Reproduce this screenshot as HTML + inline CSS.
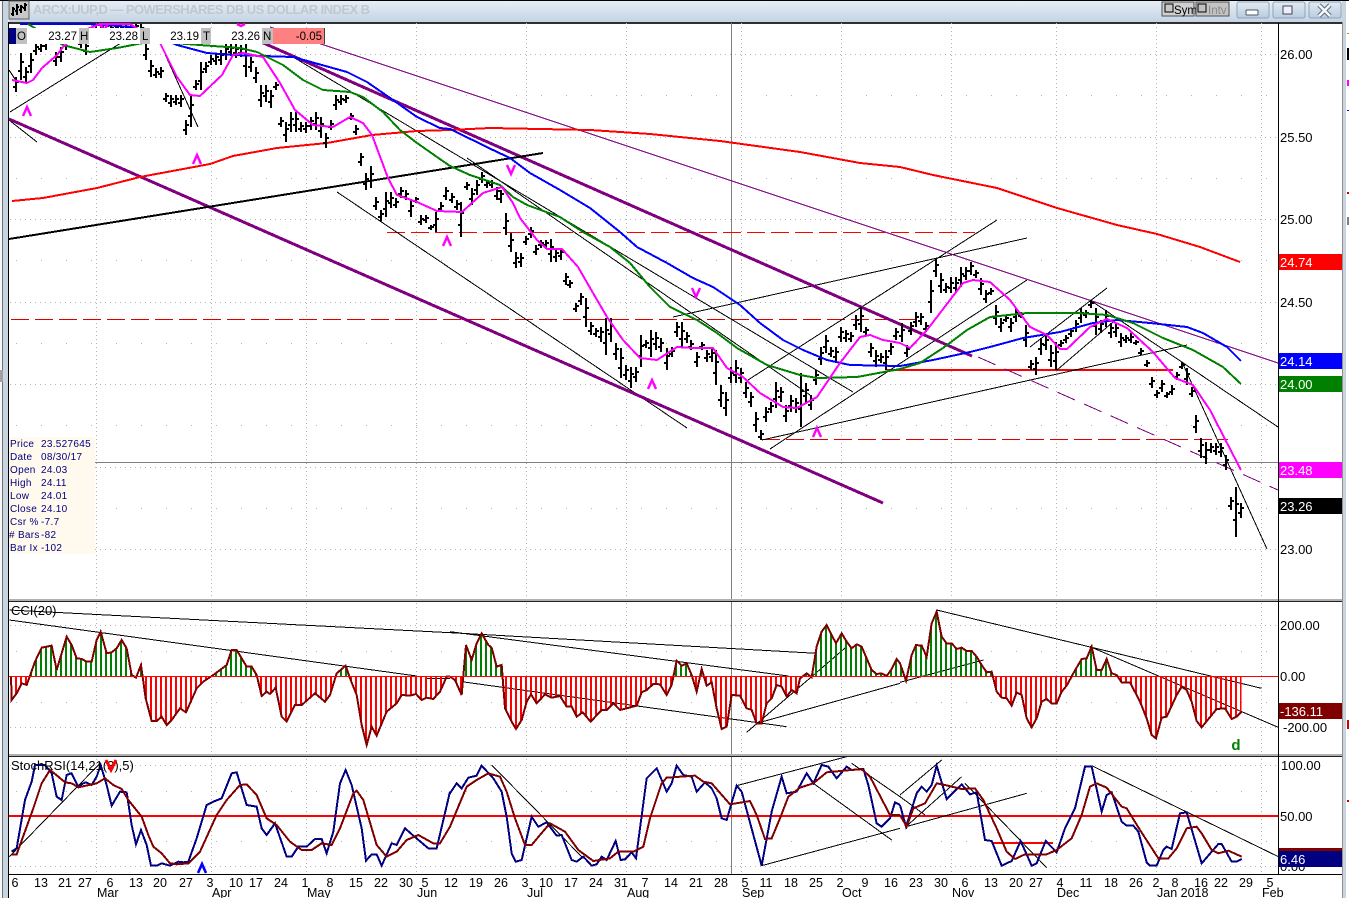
<!DOCTYPE html>
<html><head><meta charset="utf-8"><title>ARCX:UUP,D</title>
<style>
html,body{margin:0;padding:0;background:#fff;width:1349px;height:898px;overflow:hidden}
svg{display:block;font-family:"Liberation Sans",sans-serif}
.a{font-size:13px;fill:#000}
.w{font-size:13px;fill:#fff}
.d{font-size:12.5px;fill:#000;text-anchor:middle}
.m{font-size:12.5px;fill:#000}
.i{font-size:10px;fill:#000080;letter-spacing:.3px}
.h{font-size:11.5px;fill:#000}
.r{text-anchor:end}
</style></head><body>
<svg width="1349" height="898" viewBox="0 0 1349 898" xmlns="http://www.w3.org/2000/svg" shape-rendering="crispEdges">
<defs>
<linearGradient id="tb" x1="0" y1="0" x2="0" y2="1"><stop offset="0" stop-color="#e6eef6"/><stop offset="1" stop-color="#c4d4e4"/></linearGradient>
<linearGradient id="bt" x1="0" y1="0" x2="0" y2="1"><stop offset="0" stop-color="#e2ebf4"/><stop offset="1" stop-color="#b8cce0"/></linearGradient>
<pattern id="hs" width="15" height="900" patternUnits="userSpaceOnUse"><rect width="6" height="244" fill="#008000" shape-rendering="crispEdges"/><rect y="244" width="6" height="656" fill="#f00" shape-rendering="crispEdges"/></pattern>
<clipPath id="mc"><rect x="9" y="23" width="1269" height="576"/></clipPath>
<clipPath id="cc"><rect x="9" y="602" width="1269" height="152"/></clipPath>
<clipPath id="sc"><rect x="9" y="757" width="1269" height="117"/></clipPath>
</defs>

<!-- frame -->
<rect width="1349" height="898" fill="#fff"/>
<rect x="0" y="0" width="9" height="898" fill="#f4f6f8"/>
<rect x="2" y="0" width="1" height="898" fill="#707070"/>
<rect x="3" y="0" width="5" height="898" fill="#c8d4e0"/>
<rect x="8" y="22" width="1" height="876" fill="#000"/>
<rect x="0" y="370" width="3" height="12" fill="#a0a0a0"/>
<rect x="1342" y="0" width="4" height="898" fill="#c8d4e0"/>
<rect x="1342" y="22" width="1" height="876" fill="#909090"/>
<rect x="1347" y="33" width="2" height="1" fill="#d08020"/><rect x="1347" y="48" width="2" height="12" fill="#000"/><rect x="1347" y="80" width="2" height="6" fill="#f0f"/><rect x="1347" y="110" width="2" height="1" fill="#00f"/><rect x="1347" y="192" width="2" height="2" fill="#c00"/><rect x="1347" y="217" width="2" height="8" fill="#808080"/><rect x="1347" y="720" width="2" height="9" fill="#c00"/><rect x="1347" y="800" width="2" height="2" fill="#c00"/>

<!-- title bar -->
<rect x="0" y="0" width="1349" height="1" fill="#000"/>
<rect x="9" y="1" width="1333" height="21" fill="url(#tb)"/>
<rect x="9" y="22" width="1333" height="2" fill="#303030"/>
<rect x="9" y="1" width="20" height="18" fill="#c8c8c8" stroke="#606060"/>
<path d="M13 7v9M11 14h2M13 9h2M17 4v11M15 11h2M17 7h2M21 5v8M19 10h2M21 7h2M25 3v8M23 8h2M25 5h2" stroke="#000" stroke-width="2" fill="none"/>
<text x="33" y="14" font-size="13" font-weight="bold" fill="#c0c7ce" textLength="337">ARCX:UUP,D &#8212; POWERSHARES DB US DOLLAR INDEX B</text>

<rect x="1162" y="2" width="32" height="14" fill="#d0d0d0" stroke="#505050"/><rect x="1165" y="4" width="8" height="8" fill="#c8c8c8" stroke="#000"/><text x="1174" y="14" font-size="11.5" fill="#000">Sym</text>
<rect x="1196" y="2" width="33" height="14" fill="#c4c4c4" stroke="#505050"/><rect x="1198" y="4" width="8" height="8" fill="#c0c0c0" stroke="#000"/><text x="1208" y="14" font-size="11.5" fill="#888">Intv</text>
<rect x="1237" y="2" width="32" height="16" rx="2" fill="url(#bt)" stroke="#8ea4b8"/><rect x="1246" y="10" width="12" height="5" rx="1" fill="#fff" stroke="#505860"/>
<rect x="1273" y="2" width="32" height="16" rx="2" fill="url(#bt)" stroke="#8ea4b8"/><rect x="1283" y="6" width="9" height="8" fill="#eef" stroke="#404850" stroke-width="1.4"/>
<rect x="1309" y="2" width="32" height="16" rx="2" fill="url(#bt)" stroke="#8ea4b8"/><path d="M1319 5l11 11M1330 5l-11 11" stroke="#606c78" stroke-width="4.5" shape-rendering="auto"/><path d="M1319 5l11 11M1330 5l-11 11" stroke="#f4f8fc" stroke-width="2.5" fill="none" shape-rendering="auto"/>

<!-- grid main -->
<g stroke="#b4b4b4" stroke-width="1" fill="none">
<g stroke-dasharray="1 4">
<path d="M10 54.5H1278M10 137.5H1278M10 219.5H1278M10 302.5H1278M10 384.5H1278M10 467.5H1278M10 549.5H1278"/>
<path d="M10 625.5H1278M10 727.5H1278M10 765.5H1278M10 866.5H1278"/>
</g>
<path stroke-dasharray="1 24" d="M16 95.5H1278M16 178.5H1278M16 260.5H1278M16 343.5H1278M16 425.5H1278M16 508.5H1278M16 651.5H1278M16 702.5H1278M16 791.5H1278M16 841.5H1278"/>
<path stroke-dasharray="1 3" d="M96.5 23V874M211.5 23V874M306.5 23V874M416.5 23V874M526.5 23V874M626.5 23V874M741.5 23V874M841.5 23V874M951.5 23V874M1056.5 23V874M1156.5 23V874M1261.5 23V874"/>
</g>

<!-- crosshair -->
<path d="M731.5 23V874M95 462.5H1278" stroke="#808080" stroke-width="1" fill="none"/>

<!-- MAIN PANEL -->
<g clip-path="url(#mc)" fill="none">
<!-- dashed red -->
<path d="M11 319.5H917" stroke="#d80000" stroke-dasharray="18 6"/>
<path d="M387 232.5H975" stroke="#f00" stroke-dasharray="18 6"/>
<path d="M762 439.5H1228" stroke="#e00000" stroke-dasharray="18 6"/>
<path d="M887 370H1173" stroke="#f00" stroke-width="2"/>
<!-- thin black -->
<g stroke="#000" stroke-width="1">
<path d="M10 112L145 28M9 70L17 82M9 120L37 142M160 43L198 127"/>
<path d="M337 192L687 428M293 57L853 392M467 158L810 395"/>
<path d="M762 440L1187 345M748 380L997 220M770 449L1027 280M673 317L1027 238"/>
<path d="M1030 347L1107 288M1057 370L1113 322M1090 300L1278 427M1182 362L1267 549"/>
</g>
<!-- purple -->
<path d="M270 27L1278 363" stroke="#800080" stroke-width="1"/>
<path d="M978 357L1278 490" stroke="#800080" stroke-width="1" stroke-dasharray="19 10"/>
<path d="M9 119L883 503" stroke="#800080" stroke-width="3"/>
<path d="M243 34L972 356" stroke="#800080" stroke-width="3"/>
<!-- black thick -->
<path d="M9 239L543 153" stroke="#000" stroke-width="2"/>
<!-- red 200 -->
<polyline stroke="#f00" stroke-width="2" points="12,201 43,198 97,188 140,177 210,164 233,156 277,148 327,143 372,135 417,131 450,130 490,128 590,130 650,134 720,141 800,152 860,163 900,167 933,175 997,188 1057,208 1117,225 1157,234 1200,247 1240,262"/>
<!-- bars -->
<path stroke="#000" stroke-width="2" d="
M16 77v15m-3-5h3m0-5h3M21 53v27m-3-9h3m0-9h3M26 67v15m-3-5h3m0-5h3M31 53v20m-3-7h3m0-6h3M36 43v12m-3-4h3m0-4h3M41 42v10m-3-3h3m0-3h3M46 38v12m-3-4h3m0-4h3M51 30v12m-3-4h3m0-4h3M56 52v14m-3-5h3m0-4h3M61 47v15m-3-5h3m0-5h3M66 38v12m-3-4h3m0-4h3M71 28v12m-3-4h3m0-4h3M76 28v15m-3-5h3m0-5h3M81 35v13m-3-4h3m0-5h3M86 42v13m-3-4h3m0-5h3M91 30v14m-3-5h3m0-4h3M96 25v13m-3-4h3m0-5h3M101 24v10m-3-3h3m0-4h3M106 24v8m-3-3h3m0-3h3M111 24v12m-3-4h3m0-4h3M116 24v12m-3-4h3m0-4h3M121 24v10m-3-3h3m0-3h3M126 24v10m-3-3h3m0-3h3M131 24v8m-3-3h3m0-2h3M136 24v6m-3-2h3m0-2h3M141 24v10m-3-3h3m0-3h3
M146 43v17m-3-5h3m0-6h3M151 60v17m-3-6h3m0-5h3M156 68v10m-3-3h3m0-3h3M161 67v11m-3-4h3m0-3h3M166 93v9m-3-3h3m0-3h3M171 95v12m-3-4h3m0-4h3M176 95v10m-3-3h3m0-3h3M181 95v12m-3-4h3m0-4h3M186 120v15m-3-5h3m0-5h3M191 95v32m-3-11h3m0-11h3M196 80v10m-3-3h3m0-3h3M201 62v28m-3-9h3m0-9h3M206 62v11m-3-4h3m0-3h3M211 55v10m-3-3h3m0-3h3M216 53v12m-3-4h3m0-4h3M221 50v15m-3-5h3m0-5h3M226 43v17m-3-6h3m0-5h3M231 43v13m-3-4h3m0-4h3M236 44v14m-3-5h3m0-4h3M241 45v12m-3-4h3m0-4h3M246 43v34m-3-11h3m0-11h3M251 57v15m-3-5h3m0-5h3M256 67v16m-3-5h3m0-5h3M261 85v22m-3-7h3m0-7h3M266 85v17m-3-6h3m0-5h3M271 90v18m-3-6h3m0-6h3M276 82v8m-3-3h3m0-2h3
M281 117v10m-3-3h3m0-3h3M286 122v20m-3-7h3m0-6h3M291 112v20m-3-7h3m0-6h3M296 112v20m-3-7h3m0-6h3M301 122v10m-3-3h3m0-3h3M306 122v11m-3-4h3m0-3h3M311 117v13m-3-4h3m0-5h3M316 112v18m-3-6h3m0-6h3M321 117v21m-3-7h3m0-7h3M326 133v15m-3-5h3m0-5h3M331 120v10m-3-3h3m0-3h3M336 95v15m-3-5h3m0-5h3M341 95v10m-3-3h3m0-3h3M346 95v8m-3-3h3m0-2h3M351 113v7m-3-2h3m0-2h3M356 125v10m-3-3h3m0-3h3M361 153v13m-3-4h3m0-5h3M366 173v17m-3-6h3m0-5h3M371 166v22m-3-7h3m0-7h3M376 197v13m-3-4h3m0-4h3M381 210v11m-3-4h3m0-3h3M386 192v25m-3-8h3m0-8h3M391 192v16m-3-5h3m0-5h3M396 198v10m-3-3h3m0-3h3M401 187v11m-3-4h3m0-3h3M406 190v10m-3-3h3m0-3h3M411 200v17m-3-6h3m0-5h3M416 197v6m-3-2h3m0-2h3M421 215v10m-3-3h3m0-3h3M426 215v8m-3-3h3m0-2h3M431 225v5m-3-2h3m0-1h3M436 212v20m-3-7h3m0-6h3M441 202v10m-3-3h3m0-3h3M446 187v13m-3-4h3m0-5h3
M452 193v10m-3-3h3m0-3h3M457 200v10m-3-3h3m0-3h3M461 202v35m-3-12h3m0-12h3M467 182v8m-3-3h3m0-2h3M472 188v17m-3-6h3m0-5h3M477 180v15m-3-5h3m0-5h3M482 172v11m-3-4h3m0-3h3M487 180v8m-3-3h3m0-2h3M492 180v8m-3-3h3m0-2h3M497 187v13m-3-4h3m0-5h3M501 190v13m-3-4h3m0-5h3M506 213v22m-3-7h3m0-7h3M511 233v19m-3-6h3m0-6h3M516 252v16m-3-5h3m0-5h3M521 253v14m-3-5h3m0-4h3M526 236v9m-3-3h3m0-3h3M531 227v11m-3-4h3m0-3h3M536 245v10m-3-3h3m0-3h3M541 240v8m-3-3h3m0-2h3M546 240v8m-3-3h3m0-2h3M551 239v23m-3-8h3m0-7h3M556 248v14m-3-5h3m0-4h3M561 248v12m-3-4h3m0-4h3M566 273v12m-3-4h3m0-4h3M570 280v8m-3-3h3m0-2h3M576 303v9m-3-3h3m0-3h3M581 293v12m-3-4h3m0-4h3M586 298v29m-3-10h3m0-9h3M591 322v13m-3-4h3m0-5h3M596 328v9m-3-3h3m0-3h3M601 327v15m-3-5h3m0-5h3M606 318v37m-3-12h3m0-13h3M611 318v24m-3-8h3m0-8h3M616 343v17m-3-6h3m0-5h3M621 348v30m-3-10h3m0-10h3M626 365v15m-3-5h3m0-5h3M631 367v21m-3-7h3m0-7h3M636 367v15m-3-5h3m0-5h3M641 335v32m-3-11h3m0-10h3M646 340v8m-3-3h3m0-2h3M651 330v27m-3-9h3m0-9h3M656 332v18m-3-6h3m0-6h3M661 338v14m-3-5h3m0-4h3M667 348v22m-3-7h3m0-7h3M672 347v10m-3-3h3m0-3h3M677 322v15m-3-5h3m0-5h3M682 322v25m-3-8h3m0-8h3M687 332v11m-3-4h3m0-3h3M691 340v10m-3-3h3m0-3h3M697 352v15m-3-5h3m0-5h3M702 342v8m-3-3h3m0-2h3M707 350v12m-3-4h3m0-4h3M712 348v14m-3-5h3m0-4h3M716 350v35m-3-12h3m0-11h3M721 385v22m-3-7h3m0-7h3M726 392v24m-3-8h3m0-8h3M731 367v16m-3-5h3m0-5h3M736 360v23m-3-8h3m0-7h3M741 368v15m-3-5h3m0-5h3M746 382v16m-3-5h3m0-5h3M751 392v15m-3-5h3m0-5h3M756 412v20m-3-7h3m0-6h3M761 430v10m-3-3h3m0-3h3M766 407v15m-3-5h3m0-5h3M771 402v11m-3-4h3m0-3h3M776 382v26m-3-9h3m0-8h3M781 387v15m-3-5h3m0-5h3M786 405v17m-3-6h3m0-5h3M791 395v17m-3-6h3m0-5h3M796 398v15m-3-5h3m0-5h3M801 373v54m-3-18h3m0-18h3M806 383v20m-3-7h3m0-6h3M811 395v15m-3-5h3m0-5h3M816 370v15m-3-5h3m0-5h3M821 347v18m-3-6h3m0-6h3M826 335v18m-3-6h3m0-6h3M831 347v10m-3-3h3m0-3h3M836 347v15m-3-5h3m0-5h3M841 327v15m-3-5h3m0-5h3M846 330v12m-3-4h3m0-4h3M851 332v10m-3-3h3m0-3h3M856 315v15m-3-5h3m0-5h3M861 307v25m-3-8h3m0-8h3M866 327v8m-3-3h3m0-2h3M871 343v14m-3-5h3m0-4h3M876 350v17m-3-6h3m0-5h3M881 353v10m-3-3h3m0-3h3M886 350v20m-3-7h3m0-6h3M891 343v12m-3-4h3m0-4h3M896 328v12m-3-4h3m0-4h3
M902 323v19m-3-6h3m0-6h3M907 345v12m-3-4h3m0-4h3M911 322v13m-3-4h3m0-5h3M916 312v15m-3-5h3m0-5h3M921 313v12m-3-4h3m0-4h3M926 322v10m-3-3h3m0-3h3M931 280v33m-3-11h3m0-11h3M936 258v19m-3-6h3m0-6h3M941 273v20m-3-7h3m0-6h3M946 283v10m-3-3h3m0-3h3M951 277v16m-3-5h3m0-5h3M956 277v16m-3-5h3m0-5h3M961 267v20m-3-7h3m0-6h3M966 267v13m-3-4h3m0-5h3M971 262v13m-3-4h3m0-5h3M976 270v8m-3-3h3m0-2h3M981 278v17m-3-6h3m0-5h3M986 290v13m-3-4h3m0-5h3M991 288v7m-3-2h3m0-2h3M996 305v20m-3-7h3m0-6h3M1001 318v14m-3-5h3m0-4h3M1006 315v7m-3-2h3m0-2h3M1011 318v14m-3-5h3m0-4h3M1016 308v14m-3-5h3m0-4h3M1021 312v6m-3-2h3m0-2h3M1026 325v22m-3-7h3m0-7h3M1031 360v10m-3-3h3m0-3h3M1036 357v18m-3-6h3m0-6h3M1041 338v17m-3-6h3m0-5h3M1046 335v15m-3-5h3m0-5h3M1051 345v22m-3-7h3m0-7h3M1056 342v28m-3-9h3m0-9h3M1061 340v7m-3-2h3m0-2h3M1066 335v8m-3-3h3m0-2h3M1071 328v9m-3-3h3m0-3h3M1076 320v12m-3-4h3m0-4h3M1081 308v15m-3-5h3m0-5h3M1086 310v8m-3-3h3m0-2h3M1091 300v8m-3-3h3m0-2h3M1096 308v27m-3-9h3m0-9h3M1101 320v13m-3-4h3m0-5h3M1106 310v17m-3-6h3m0-5h3M1111 323v15m-3-5h3m0-5h3M1116 323v14m-3-5h3m0-4h3M1121 333v14m-3-5h3m0-4h3M1126 335v8m-3-3h3m0-2h3M1131 333v10m-3-3h3m0-3h3M1136 340v5m-3-2h3m0-1h3M1141 348v7m-3-2h3m0-2h3M1147 360v7m-3-2h3m0-2h3M1152 377v11m-3-4h3m0-3h3M1157 390v8m-3-3h3m0-2h3M1162 380v12m-3-4h3m0-4h3M1167 392v6m-3-2h3m0-2h3M1172 385v10m-3-3h3m0-3h3M1177 372v8m-3-3h3m0-2h3M1182 362v7m-3-2h3m0-2h3M1187 368v17m-3-6h3m0-5h3M1192 387v10m-3-3h3m0-3h3M1196 415v18m-3-6h3m0-6h3M1201 438v20m-3-7h3m0-6h3M1206 442v22m-3-7h3m0-7h3M1211 443v10m-3-3h3m0-3h3M1216 443v12m-3-4h3m0-4h3M1221 443v14m-3-5h3m0-4h3M1226 455v15m-3-5h3m0-5h3M1231 497v13m-3-4h3m0-5h3M1236 487v50m-3-17h3m0-16h3M1241 503v15m-3-5h3m0-5h3"/>
<!-- blue MA -->
<polyline stroke="#00f" stroke-width="2" points="20,24 87,24 133,27 177,45 207,53 233,55 293,57 347,72 367,82 393,100 417,117 440,128 450,129 493,150 510,158 530,173 560,190 590,208 620,232 637,247 667,263 693,278 713,287 740,305 760,323 783,340 803,350 827,360 850,365 900,366 933,360 970,352 990,347 1023,338 1060,332 1093,323 1117,320 1150,323 1187,327 1203,333 1227,347 1241,361"/>
<!-- green MA -->
<polyline stroke="#008000" stroke-width="2" points="28,24 63,45 90,52 117,48 143,43 173,43 240,48 257,52 283,65 303,80 323,90 350,92 363,97 383,112 400,130 417,143 437,157 450,166 470,175 500,185 513,197 527,205 560,217 583,232 610,247 630,263 650,287 670,307 697,320 717,333 737,348 767,365 800,375 817,378 857,377 900,369 920,363 943,348 967,330 990,317 1027,313 1077,313 1107,315 1133,323 1163,338 1193,350 1223,367 1241,384"/>
<!-- pink MA -->
<polyline stroke="#f0f" stroke-width="2" points="12,80 27,83 33,80 42,68 57,55 63,47 80,32 100,24 130,24 160,43 177,77 190,95 200,96 222,75 233,55 243,53 263,57 280,83 295,110 313,125 333,127 350,117 363,123 372,135 388,178 397,195 417,202 437,211 462,212 483,193 502,187 513,203 520,218 537,240 547,249 562,249 578,267 593,293 607,317 623,340 640,358 657,360 677,347 693,348 713,348 727,368 743,377 760,393 783,407 797,408 817,397 840,363 860,337 870,335 883,340 900,343 910,348 927,330 950,300 963,283 973,280 990,282 1010,300 1030,327 1047,335 1060,349 1067,349 1090,327 1107,319 1127,328 1153,352 1175,378 1193,385 1210,410 1227,443 1241,470"/>
<!-- magenta markers -->
<g stroke="#f0f" stroke-width="2.4" shape-rendering="auto">
<path d="M23 116L27 107L31 116M193 164L197 155L201 164M443 246L447 237L451 246M648 389L652 380L656 389M813 437L817 428L821 437"/>
<path d="M507 165L511 174L515 165M692 288L696 297L700 288"/>
<path d="M100 24L104 30L108 24M237 24L241 26L245 24"/>
</g>
</g>

<!-- OHLC header row -->
<rect x="9" y="28" width="316" height="16" fill="#fff"/>
<rect x="9" y="28" width="7" height="16" fill="#000080"/>
<rect x="16" y="28" width="11" height="16" fill="#c0c0c0"/>
<rect x="79" y="28" width="10" height="16" fill="#c0c0c0"/>
<rect x="140" y="28" width="10" height="16" fill="#c0c0c0"/>
<rect x="201" y="28" width="10" height="16" fill="#c0c0c0"/>
<rect x="262" y="28" width="11" height="16" fill="#c0c0c0"/>
<rect x="273" y="28" width="51" height="16" fill="#ff8080"/>
<rect x="324" y="28" width="1" height="16" fill="#404040"/>
<g class="h">
<text class="h" x="17" y="40">O</text><text class="h r" x="77" y="40">23.27</text>
<text class="h" x="80" y="40">H</text><text class="h r" x="138" y="40">23.28</text>
<text class="h" x="142" y="40">L</text><text class="h r" x="199" y="40">23.19</text>
<text class="h" x="203" y="40">T</text><text class="h r" x="260" y="40">23.26</text>
<text class="h" x="263" y="40">N</text><text class="h r" x="322" y="40">-0.05</text>
</g>

<!-- Info box -->
<rect x="9" y="437" width="86" height="117" fill="#fff9ee"/>
<text class="i" x="10" y="447">Price</text><text class="i" x="41" y="447">23.527645</text>
<text class="i" x="10" y="460">Date</text><text class="i" x="41" y="460">08/30/17</text>
<text class="i" x="10" y="473">Open</text><text class="i" x="41" y="473">24.03</text>
<text class="i" x="10" y="486">High</text><text class="i" x="41" y="486">24.11</text>
<text class="i" x="10" y="499">Low</text><text class="i" x="41" y="499">24.01</text>
<text class="i" x="10" y="512">Close</text><text class="i" x="41" y="512">24.10</text>
<text class="i" x="10" y="525">Csr %</text><text class="i" x="41" y="525">-7.7</text>
<text class="i" x="9" y="538"># Bars</text><text class="i" x="41" y="538">-82</text>
<text class="i" x="10" y="551">Bar Ix</text><text class="i" x="41" y="551">-102</text>

<!-- CCI PANEL -->
<rect x="9" y="599" width="1333" height="2" fill="#b0b0b0"/><rect x="9" y="601" width="1333" height="1" fill="#202020"/>
<g clip-path="url(#cc)" fill="none">
<g transform="translate(0,595) scale(.33333)" stroke="#000" stroke-width="3">
<path d="M28 45L1350 113M28 75L1250 243M1280 250H1350"/>
</g>
<g transform="translate(450,595) scale(.33333)" stroke="#000" stroke-width="3">
<path d="M0 113L1100 175M0 110L1015 243M35 260L1010 395M890 412L1190 155M920 385L1350 265"/>
</g>
<g transform="translate(900,595) scale(.33333)" stroke="#000" stroke-width="3">
<path d="M0 262L250 195M110 45L1085 280M570 155L1135 397"/>
</g>
<g transform="translate(0,595) scale(.33333)"><polyline fill="url(#hs)" stroke="#800000" stroke-width="6" points="33,244 35,315 50,295 65,265 80,270 105,200 125,158 155,152 170,225 200,125 215,150 230,190 245,192 260,200 275,200 290,135 302,110 320,175 335,172 350,160 365,135 380,160 395,240 408,248 423,210 437,310 455,378 470,378 485,365 500,390 515,375 540,340 558,352 590,280 610,260 640,240 660,225 680,210 695,165 710,165 725,190 740,215 755,215 770,240 785,303 800,290 810,297 827,278 845,365 860,380 885,330 905,330 945,295 975,320 990,300 1010,235 1037,212 1050,250 1070,300 1085,390 1100,450 1115,395 1130,422 1160,350 1190,325 1205,300 1230,302 1248,297 1265,315 1280,308 1300,312 1320,290 1340,245 1350,245"/></g>
<g transform="translate(450,595) scale(.33333)"><polyline fill="url(#hs)" stroke="#800000" stroke-width="6" points="0,245 15,255 35,300 48,150 65,195 80,145 95,115 115,150 125,158 140,215 155,210 165,340 185,380 198,402 215,375 230,320 243,298 260,325 285,298 305,308 330,303 350,335 365,335 380,365 398,352 422,380 455,345 470,345 490,325 510,345 530,340 560,332 575,292 590,285 610,267 630,268 650,300 665,270 680,197 695,212 710,205 725,240 740,290 755,222 770,272 785,262 800,340 815,402 830,395 845,300 870,302 890,340 905,345 920,385 935,385 950,325 965,310 980,270 995,275 1010,305 1025,285 1040,295 1050,250 1070,235 1085,247 1100,155 1115,110 1130,90 1145,120 1158,145 1175,115 1190,140 1205,160 1220,148 1235,155 1250,190 1265,225 1280,237 1295,235 1310,243"/></g>
<g transform="translate(900,595) scale(.33333)">
<polygon fill="url(#hs)" points="-40,244 -25,222 -10,192 0,205 18,257 35,180 48,150 65,152 80,185 95,85 110,50 125,125 140,145 155,145 170,162 185,158 200,168 215,168 230,185 245,210 260,232 275,230 290,290 305,308 320,310 335,332 350,292 365,300 380,370 395,397 410,370 425,320 440,312 455,325 470,325 485,290 500,272 520,235 545,192 560,190 575,155 590,225 605,225 620,192 635,235 650,240 665,262 690,262 720,320 740,370 755,420 768,430 785,368 800,365 830,300 845,275 860,285 875,320 890,378 905,397 950,342 975,340 995,372 1010,365 1025,350 1025,244"/>
</g>
<path d="M9 676.5H1278" stroke="#f00" stroke-width="1"/>
<g transform="translate(900,595) scale(.33333)"><polyline stroke="#800000" stroke-width="6" points="-40,243 -25,222 -10,192 0,205 18,257 35,180 48,150 65,152 80,185 95,85 110,50 125,125 140,145 155,145 170,162 185,158 200,168 215,168 230,185 245,210 260,232 275,230 290,290 305,308 320,310 335,332 350,292 365,300 380,370 395,397 410,370 425,320 440,312 455,325 470,325 485,290 500,272 520,235 545,192 560,190 575,155 590,225 605,225 620,192 635,235 650,240 665,262 690,262 720,320 740,370 755,420 768,430 785,368 800,365 830,300 845,275 860,285 875,320 890,378 905,397 950,342 975,340 995,372 1010,365 1025,350"/></g>
</g>
<text x="11" y="615" font-size="13" fill="#000">CCI(20)</text>
<text x="1236" y="750" font-size="15" font-weight="bold" fill="#008000" text-anchor="middle">d</text>

<!-- STOCH PANEL -->
<rect x="9" y="754" width="1333" height="2" fill="#b0b0b0"/><rect x="9" y="756" width="1333" height="1" fill="#202020"/>
<g clip-path="url(#sc)" fill="none">
<path d="M9 816H1278" stroke="#f00" stroke-width="2"/>
<path d="M992 843H1053" stroke="#f00" stroke-width="2"/>
<g transform="translate(0,595) scale(.33333)">
<path d="M28 785L300 505" stroke="#000" stroke-width="3"/>
<polyline stroke="#000080" stroke-width="6" points="35,770 50,760 75,615 95,560 105,510 135,510 155,535 170,605 185,615 200,540 215,535 235,575 250,565 258,562 275,570 290,545 302,510 320,570 335,632 360,590 380,592 395,690 408,748 423,705 440,750 453,812 470,812 485,805 510,812 535,800 550,802 565,800 590,730 620,630 640,620 665,610 695,535 710,532 740,630 770,635 785,700 800,720 825,685 860,785 875,785 895,755 920,755 945,732 965,732 980,775 1000,710 1020,565 1037,525 1055,570 1085,700 1098,797 1115,778 1130,778 1145,812 1175,745 1190,750 1215,700 1240,722 1285,760 1310,760 1350,590"/>
<polyline stroke="#800000" stroke-width="6" points="35,778 50,778 100,640 125,565 150,525 175,545 195,562 215,565 235,577 290,565 315,550 340,570 365,582 385,615 425,665 445,720 460,755 485,775 510,805 530,808 565,805 600,770 650,660 680,615 720,570 740,568 770,600 800,670 830,690 870,740 905,765 935,765 965,745 995,750 1020,700 1060,595 1070,587 1090,615 1130,750 1160,785 1190,770 1220,735 1255,720 1300,745 1320,745 1350,695"/>
</g>
<g transform="translate(450,595) scale(.33333)">
<path d="M125 510L400 790M860 572L1190 485M935 812L1350 700M1090 565L1325 735M1205 505L1350 605" stroke="#000" stroke-width="3"/>
<polyline stroke="#000080" stroke-width="6" points="0,595 20,565 35,580 55,548 80,542 95,512 130,550 155,590 170,665 185,775 197,800 215,795 245,665 265,695 290,682 320,722 335,720 365,795 380,800 400,785 425,812 440,808 455,785 470,795 497,738 512,795 525,793 545,772 558,790 590,550 620,520 650,590 665,565 680,512 700,540 725,545 740,590 765,562 785,580 800,610 815,670 830,675 860,572 875,590 935,812 965,650 995,545 1010,595 1040,590 1070,535 1090,565 1115,510 1135,515 1160,550 1190,515 1205,525 1240,522 1255,570 1280,685 1295,695 1320,670 1335,622 1350,630"/>
<polyline stroke="#800000" stroke-width="6" points="0,695 50,575 80,555 115,535 150,545 170,590 195,670 225,750 245,750 270,720 300,685 345,710 385,765 430,798 480,790 505,770 550,770 580,755 600,670 635,565 650,548 735,542 760,560 785,565 840,628 900,618 920,660 945,732 965,730 990,670 1015,605 1050,578 1090,565 1130,532 1235,522 1260,545 1320,660 1350,660"/>
</g>
<g transform="translate(900,595) scale(.33333)">
<path d="M0 600L125 495M18 695L185 545M18 695L380 595M195 565L440 818M575 512L1135 785M0 605L75 660" stroke="#000" stroke-width="3"/>
<polyline stroke="#000080" stroke-width="6" points="0,630 18,695 50,595 65,575 80,590 95,570 110,512 140,612 185,568 210,598 230,592 255,735 275,738 305,812 335,798 362,738 395,812 410,805 437,738 470,772 495,700 525,640 555,515 575,515 605,650 620,600 635,592 665,680 680,692 700,692 715,710 740,802 750,812 770,812 790,765 800,755 815,762 840,655 860,652 905,805 955,747 965,747 995,800 1010,800 1025,792"/>
<polyline stroke="#800000" stroke-width="6" points="0,660 20,695 40,640 75,625 110,565 135,570 185,582 225,580 250,615 290,700 320,770 345,792 375,778 440,778 470,765 515,730 545,660 570,575 590,565 620,578 665,635 680,640 720,705 775,790 805,790 830,760 860,700 890,695 905,715 935,765 955,775 985,767 1025,785"/>
</g>
</g>
<text x="11" y="770" font-size="13" fill="#000">StochRSI(14,21(3),5)</text>
<path d="M106 760L111 770L116 760" stroke="#f00" stroke-width="3" fill="none" shape-rendering="auto"/>
<path d="M198 873L202 864L206 873" stroke="#0000ff" stroke-width="2.6" fill="none" shape-rendering="auto"/>

<!-- axis lines -->
<rect x="9" y="874" width="1333" height="1" fill="#000"/>
<rect x="1278" y="23" width="1" height="851" fill="#000"/>

<!-- axis labels -->
<text class="a" x="1280" y="59">26.00</text>
<text class="a" x="1280" y="142">25.50</text>
<text class="a" x="1280" y="224">25.00</text>
<text class="a" x="1280" y="307">24.50</text>
<text class="a" x="1280" y="554">23.00</text>
<rect x="1279" y="254" width="63" height="16" fill="#f00"/><text class="w" x="1280" y="267">24.74</text>
<rect x="1279" y="353" width="63" height="16" fill="#00f"/><text class="w" x="1280" y="366">24.14</text>
<rect x="1279" y="376" width="63" height="16" fill="#008000"/><text class="w" x="1280" y="389">24.00</text>
<rect x="1279" y="462" width="63" height="16" fill="#f0f"/><text class="w" x="1280" y="475">23.48</text>
<rect x="1279" y="498" width="63" height="16" fill="#000"/><text class="w" x="1280" y="511">23.26</text>
<text class="a" x="1280" y="630">200.00</text>
<text class="a" x="1280" y="681">0.00</text>
<text class="a" x="1283" y="732">-200.00</text>
<rect x="1279" y="703" width="63" height="16" fill="#800000"/><text class="w" x="1280" y="716">-136.11</text>
<text class="a" x="1281" y="770">100.00</text>
<text class="a" x="1280" y="821">50.00</text>
<text class="a" x="1280" y="871">0.00</text>
<rect x="1279" y="848" width="63" height="3" fill="#800000"/>
<rect x="1279" y="851" width="63" height="16" fill="#000080"/><text class="w" x="1280" y="864">6.46</text>

<!-- date labels -->
<text class="d" x="15" y="887">6</text><text class="d" x="41" y="887">13</text><text class="d" x="65" y="887">21</text><text class="d" x="85" y="887">27</text><text class="d" x="110" y="887">6</text><text class="d" x="136" y="887">13</text><text class="d" x="160" y="887">20</text><text class="d" x="186" y="887">27</text><text class="d" x="210" y="887">3</text><text class="d" x="236" y="887">10</text><text class="d" x="256" y="887">17</text><text class="d" x="281" y="887">24</text><text class="d" x="305" y="887">1</text><text class="d" x="330" y="887">8</text><text class="d" x="356" y="887">15</text><text class="d" x="381" y="887">22</text><text class="d" x="406" y="887">30</text><text class="d" x="425" y="887">5</text><text class="d" x="451" y="887">12</text><text class="d" x="476" y="887">19</text><text class="d" x="501" y="887">26</text><text class="d" x="525" y="887">3</text><text class="d" x="546" y="887">10</text><text class="d" x="571" y="887">17</text><text class="d" x="596" y="887">24</text><text class="d" x="621" y="887">31</text><text class="d" x="645" y="887">7</text><text class="d" x="671" y="887">14</text><text class="d" x="696" y="887">21</text><text class="d" x="721" y="887">28</text><text class="d" x="745" y="887">5</text><text class="d" x="766" y="887">11</text><text class="d" x="791" y="887">18</text><text class="d" x="816" y="887">25</text><text class="d" x="840" y="887">2</text><text class="d" x="865" y="887">9</text><text class="d" x="891" y="887">16</text><text class="d" x="916" y="887">23</text><text class="d" x="941" y="887">30</text><text class="d" x="965" y="887">6</text><text class="d" x="991" y="887">13</text><text class="d" x="1016" y="887">20</text><text class="d" x="1036" y="887">27</text><text class="d" x="1060" y="887">4</text><text class="d" x="1086" y="887">11</text><text class="d" x="1111" y="887">18</text><text class="d" x="1136" y="887">26</text><text class="d" x="1156" y="887">2</text><text class="d" x="1175" y="887">8</text><text class="d" x="1201" y="887">16</text><text class="d" x="1221" y="887">22</text><text class="d" x="1246" y="887">29</text><text class="d" x="1270" y="887">5</text>
<text class="m" x="97" y="897">Mar</text><text class="m" x="212" y="897">Apr</text><text class="m" x="307" y="897">May</text><text class="m" x="417" y="897">Jun</text><text class="m" x="527" y="897">Jul</text><text class="m" x="627" y="897">Aug</text><text class="m" x="742" y="897">Sep</text><text class="m" x="842" y="897">Oct</text><text class="m" x="952" y="897">Nov</text><text class="m" x="1057" y="897">Dec</text><text class="m" x="1157" y="897">Jan 2018</text><text class="m" x="1262" y="897">Feb</text>
</svg>
</body></html>
